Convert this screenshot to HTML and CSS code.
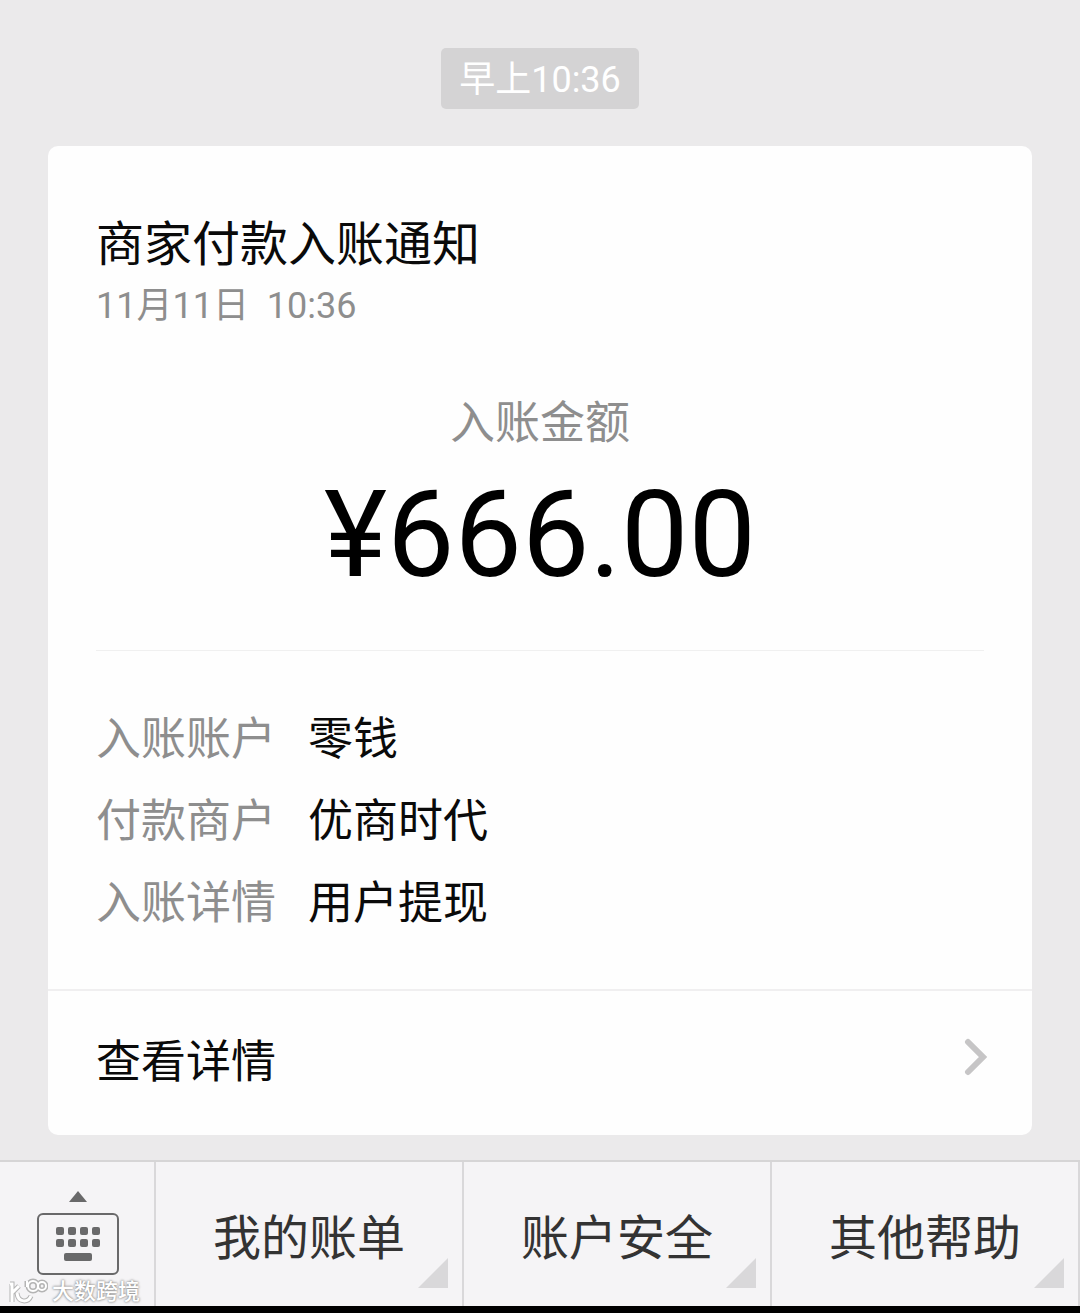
FILE: index.html
```
<!DOCTYPE html>
<html lang="zh-CN">

<head>
    <meta charset="UTF-8">
    <meta name="viewport" content="width=device-width, initial-scale=1.0">
    <title>商家付款入账通知</title>
    <link rel="stylesheet" href="styles.css">
</head>

<body>
    <main class="chat">
        <time class="chat-time">早上10:36</time>

        <!-- Payment notice card -->
        <article class="card">
            <div class="card-body">
                <h1 class="card-title">商家付款入账通知</h1>
                <p class="card-date">11月11日&nbsp; 10:36</p>

                <div class="amount">
                    <p class="amount-label">入账金额</p>
                    <p class="amount-value">¥666.00</p>
                </div>

                <dl class="info">
                    <dt>入账账户</dt>
                    <dd>零钱</dd>
                    <dt>付款商户</dt>
                    <dd>优商时代</dd>
                    <dt>入账详情</dt>
                    <dd>用户提现</dd>
                </dl>
            </div>

            <a class="card-link" href="#">
                <span>查看详情</span>
                <svg class="arrow" viewBox="0 0 24 38" aria-hidden="true">
                    <path d="M4 4 L19 19 L4 34" />
                </svg>
            </a>
        </article>
    </main>

    <!-- Bottom menu -->
    <nav class="menu">
        <button class="menu-keyboard" type="button" aria-label="键盘">
            <svg class="keyboard" viewBox="0 0 84 86" aria-hidden="true">
                <path class="fill" d="M33 12 L42 1 L51 12 Z" />
                <rect class="frame" x="2" y="24" width="80" height="60" rx="5" />
                <g class="fill">
                    <rect x="20" y="37" width="8" height="8" rx="2" />
                    <rect x="32" y="37" width="8" height="8" rx="2" />
                    <rect x="44" y="37" width="8" height="8" rx="2" />
                    <rect x="56" y="37" width="8" height="8" rx="2" />
                    <rect x="20" y="49" width="8" height="8" rx="2" />
                    <rect x="32" y="49" width="8" height="8" rx="2" />
                    <rect x="44" y="49" width="8" height="8" rx="2" />
                    <rect x="56" y="49" width="8" height="8" rx="2" />
                    <rect x="28" y="63" width="28" height="8" rx="2" />
                </g>
            </svg>
        </button>
        <button class="menu-item" type="button">我的账单</button>
        <button class="menu-item" type="button">账户安全</button>
        <button class="menu-item" type="button">其他帮助</button>

        <div class="watermark">
            <svg class="watermark-logo" viewBox="0 0 40 28" aria-hidden="true">
                <g class="halo">
                    <path d="M2 6 H4 V24 M4 15 L11 8 M9 15 C10 25 20 25 23 18" />
                    <path d="M19 3 V9" />
                    <circle cx="25" cy="8" r="5" />
                    <circle cx="34" cy="8" r="4" />
                </g>
                <path class="letter" d="M2 6 H4 V24 M4 15 L11 8 M9 15 C10 25 20 25 23 18" />
                <path d="M19 3 V9" />
                <circle cx="25" cy="8" r="5" />
                <circle cx="34" cy="8" r="4" />
            </svg>
            <span>大数跨境</span>
        </div>
    </nav>
</body>

</html>
```
FILE: styles.css
```
* {
    box-sizing: border-box;
}

body {
    display: flex;
    flex-direction: column;
    min-height: 100vh;
    margin: 0;
    background-color: #ebeaeb;
    color: #0a0a0a;
    font-family: Roboto, "Noto Sans CJK SC", sans-serif;
}

h1,
p,
dl,
dd {
    margin: 0;
}

/* Message area */
.chat {
    display: flex;
    flex: 1;
    flex-direction: column;
    align-items: center;
    padding: 48px 48px 24px;
}

.chat-time {
    margin-bottom: 37px;
    padding: 3px 18px 0;
    border-radius: 5px;
    background-color: #d4d3d4;
    color: #fff;
    font-size: 36px;
    line-height: 58px;
}

.card {
    width: 100%;
    border-radius: 10px;
    background-color: #fefefe;
}

.card-body {
    padding: 67px 48px 44px;
}

.card-title {
    font-size: 48px;
    font-weight: 400;
    line-height: 64px;
}

.card-date {
    color: #8e8e8e;
    font-size: 36px;
    line-height: 58px;
}

/* Amount block */
.amount {
    padding: 57px 0 36px;
    border-bottom: 1px solid #f0f0f0;
    text-align: center;
}

.amount-label {
    color: #8e8e8e;
    font-size: 45px;
    line-height: 64px;
}

.amount-value {
    color: #000;
    font-size: 120px;
    line-height: 158px;
}

/* Account details */
.info {
    display: grid;
    grid-template-columns: max-content 1fr;
    column-gap: 32px;
    padding-top: 48px;
    font-size: 45px;
    line-height: 82px;
}

.info dt {
    color: #8e8e8e;
}

.card-link {
    display: flex;
    align-items: center;
    justify-content: space-between;
    padding: 0 44px 0 48px;
    border-top: 2px solid #f0eff0;
    color: #0a0a0a;
    font-size: 45px;
    line-height: 144px;
    text-decoration: none;
}

.arrow {
    width: 24px;
    height: 38px;
    margin-top: -12px;
    fill: none;
    stroke: #c6c5c6;
    stroke-linecap: round;
    stroke-width: 6;
}

/* Bottom menu */
.menu {
    position: relative;
    display: flex;
    height: 153px;
    border-top: 2px solid #d6d5d6;
    border-bottom: 7px solid #000;
    background-color: #f5f4f6;
}

.menu button {
    padding: 0;
    border: 0;
    border-right: 2px solid #d9d8da;
    background: none;
    color: #333;
    font-family: inherit;
    font-size: 48px;
    cursor: pointer;
}

.menu .menu-keyboard {
    width: 156px;
    padding: 10px 0 0 2px;
}

.menu .menu-item {
    position: relative;
    flex: 1;
}

/* Corner mark for items with a submenu */
.menu-item::after {
    content: "";
    position: absolute;
    right: 14px;
    bottom: 18px;
    width: 30px;
    height: 30px;
    background-color: #d9d8da;
    clip-path: polygon(100% 0, 100% 100%, 0 100%);
}

.keyboard {
    width: 84px;
    height: 86px;
}

.keyboard .fill {
    fill: #69696a;
}

.keyboard .frame {
    fill: none;
    stroke: #69696a;
    stroke-width: 2;
}

.watermark {
    position: absolute;
    bottom: 0;
    left: 8px;
    display: flex;
    align-items: center;
    gap: 4px;
    color: #fff;
    font-size: 22px;
    font-weight: 500;
    line-height: 28px;
    text-shadow: 0 0 2px #888, 0 0 3px #999;
}

.watermark-logo {
    width: 40px;
    height: 28px;
    fill: none;
    stroke: #fff;
    stroke-width: 2;
}

.watermark-logo .letter {
    stroke-width: 3;
}

.watermark-logo .halo {
    stroke: #b4b4b4;
    stroke-width: 5;
}
```
